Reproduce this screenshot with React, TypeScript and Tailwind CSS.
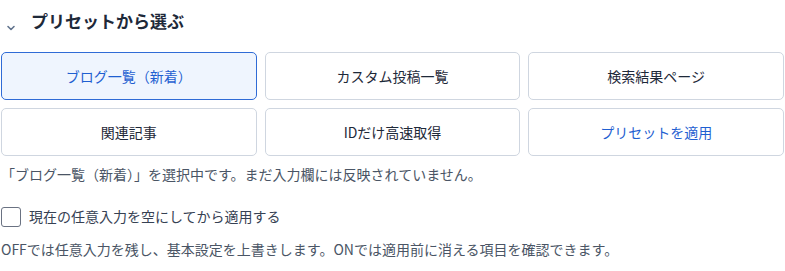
import React, { useState } from 'react';

const presets = [
    { id: 'blog', label: 'ブログ一覧（新着）' },
    { id: 'custom', label: 'カスタム投稿一覧' },
    { id: 'search', label: '検索結果ページ' },
    { id: 'related', label: '関連記事' },
    { id: 'ids', label: 'IDだけ高速取得' },
];

const App: React.FC = () => {
    const [selected, setSelected] = useState('blog');
    const [clearFirst, setClearFirst] = useState(false);
    const current = presets.find(p => p.id === selected);

    return (
        <main className="w-[785px] px-px bg-white" style={{ fontFamily: '"Noto Sans CJK JP", "Noto Sans", sans-serif' }}>
            <div className="flex items-center h-10">
                <svg width="10" height="10" viewBox="0 0 10 10" className="ml-[5px] mr-[15px] translate-y-[8px] text-slate-500" fill="none" stroke="currentColor" strokeWidth="1.6" strokeLinecap="round" strokeLinejoin="round">
                    <path d="M2 3.5 L5 6.5 L8 3.5" />
                </svg>
                <h2 className="text-[17px] font-semibold text-gray-800 leading-none">プリセットから選ぶ</h2>
            </div>

            <section className="mt-3 grid grid-cols-3 gap-2">
                {presets.map(p => {
                    const active = p.id === selected;
                    return (
                        <button
                            key={p.id}
                            onClick={() => setSelected(p.id)}
                            className={
                                active
                                    ? 'h-12 rounded-[5px] border border-[#2f6bd6] bg-[#eff5fe] text-[14px] text-[#1f5fd1]'
                                    : 'h-12 rounded-[5px] border border-[#cfd6e0] bg-white text-[14px] text-gray-800'
                            }
                        >
                            {p.label}
                        </button>
                    );
                })}
                <button className="h-12 rounded-[5px] border border-[#cfd6e0] bg-white text-[14px] text-[#1f5fd1]">プリセットを適用</button>
            </section>

            <p className="mt-2 text-[14px] leading-5 text-gray-600">「{current?.label}」を選択中です。まだ入力欄には反映されていません。</p>

            <label className="mt-[22px] flex items-center gap-2 cursor-pointer">
                <input
                    type="checkbox"
                    checked={clearFirst}
                    onChange={e => setClearFirst(e.target.checked)}
                    className="appearance-none m-0 w-5 h-5 rounded-[3px] border border-gray-500 bg-white"
                />
                <span className="text-[14px] text-gray-700">現在の任意入力を空にしてから適用する</span>
            </label>

            <p className="mt-3 text-[14px] leading-5 text-gray-600">OFFでは任意入力を残し、基本設定を上書きします。ONでは適用前に消える項目を確認できます。</p>
        </main>
    );
};

export default App;
